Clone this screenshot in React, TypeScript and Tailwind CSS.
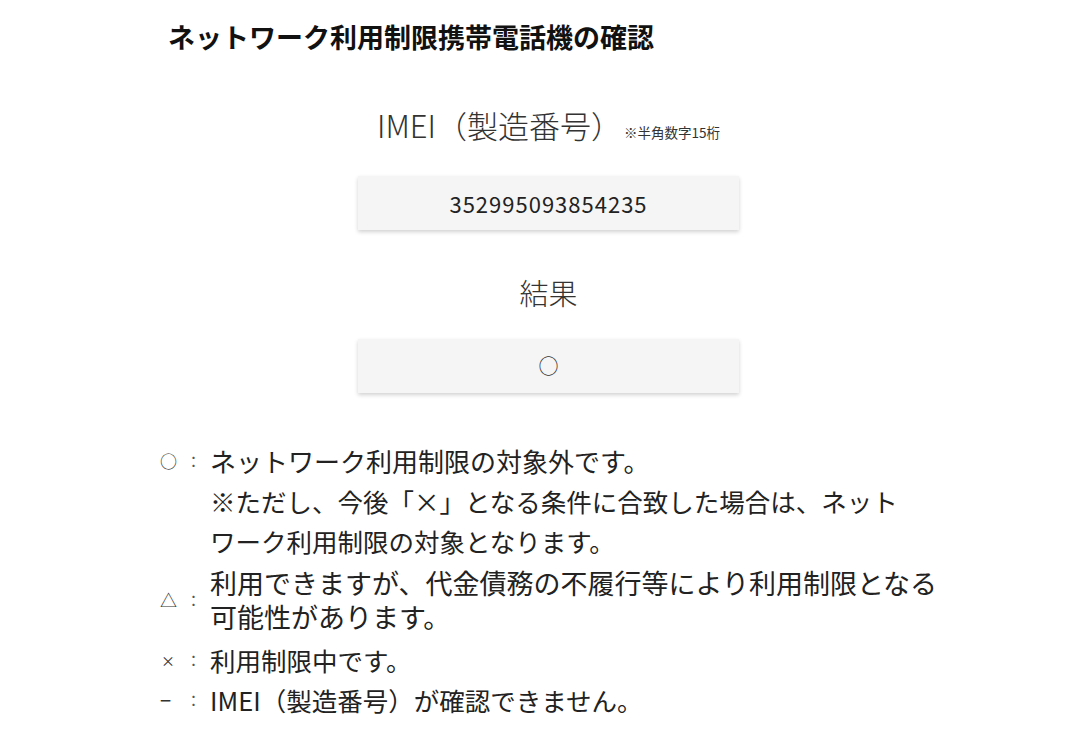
const FONT = "font-['Noto_Sans_CJK_JP','Noto_Sans',sans-serif]";

function Legend({ mark, markClass, children }: { mark: string; markClass?: string; children: React.ReactNode }) {
  return (
    <div className="flex items-center">
      <span className={`w-[24px] shrink-0 text-[#333] ${markClass ?? 'text-[17px]'}`}>{mark}</span>
      <span className="w-[26px] shrink-0 pl-[2px] text-[15px] text-[#555]">：</span>
      <div className="min-w-0">{children}</div>
    </div>
  );
}

export default function App() {
  return (
    <div className={`min-h-[753px] bg-white ${FONT}`}>
      <div className="ml-[160px] w-[777px]">
        <h1 className="mt-[19px] pl-[8px] text-[27px] font-bold leading-[36px] text-[#111]">
          ネットワーク利用制限携帯電話機の確認
        </h1>

        <div className="mt-[50px] flex items-baseline justify-center text-[#333]">
          <span className="text-[31px] font-light leading-[40px]">IMEI（製造番号）</span>
          <span className="ml-[2px] text-[13.5px]">※半角数字15桁</span>
        </div>

        <div className="mx-auto mt-[31px] flex h-[54px] w-[381px] items-center justify-center bg-[#f5f5f5] text-[22px] tracking-[1px] text-[#222] shadow-[0_2px_4px_rgba(0,0,0,0.18)]">
          352995093854235
        </div>

        <div className="mt-[42px] text-center text-[29px] font-light leading-[40px] text-[#333]">結果</div>

        <div className="mx-auto mt-[27px] flex h-[54px] w-[381px] items-center justify-center bg-[#f5f5f5] text-[20px] text-[#333] shadow-[0_2px_4px_rgba(0,0,0,0.18)]">
          ○
        </div>

        <div className="mt-[48px] text-[#222]">
          <div className="flex items-start">
            <span className="w-[24px] shrink-0 text-[17px] leading-[40px] text-[#333]">○</span>
            <span className="w-[26px] shrink-0 pl-[2px] text-[15px] leading-[40px] text-[#555]">：</span>
            <div>
              <p className="text-[26px] leading-[40px]">ネットワーク利用制限の対象外です。</p>
              <p className="w-[700px] text-[25.5px] leading-[40px]">
                ※ただし、今後「×」となる条件に合致した場合は、ネットワーク利用制限の対象となります。
              </p>
            </div>
          </div>

          <div className="mt-[5px]">
            <Legend mark="△" markClass="text-[17px]">
              <p className="w-[740px] text-[27px] leading-[34px]">
                利用できますが、代金債務の不履行等により利用制限となる可能性があります。
              </p>
            </Legend>
          </div>

          <div className="mt-[6px]">
            <Legend mark="×" markClass="text-[14px] pl-[1px]">
              <p className="text-[25.5px] leading-[40px]">利用制限中です。</p>
            </Legend>
          </div>

          <Legend mark="−" markClass="text-[20px] leading-[20px]">
            <p className="text-[25.5px] leading-[40px]">IMEI（製造番号）が確認できません。</p>
          </Legend>
        </div>
      </div>
    </div>
  );
}
